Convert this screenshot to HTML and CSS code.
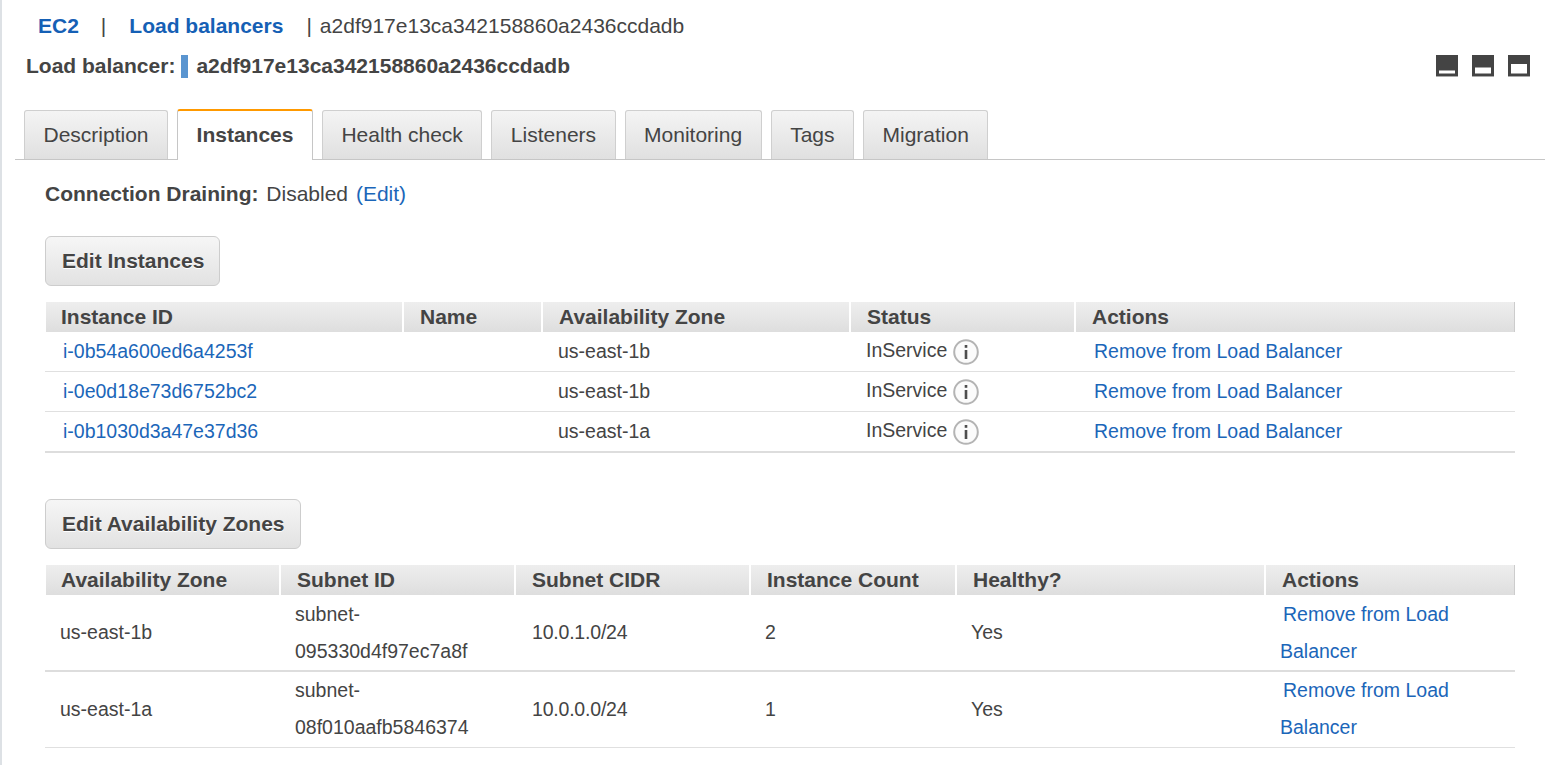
FILE: index.html
```html
<!DOCTYPE html>
<html lang="en">
<head>
<meta charset="utf-8">
<title>Load balancer</title>
<link rel="stylesheet" href="styles.css">
</head>
<body>
<div class="page">
  <nav class="crumbs">
    <a class="crumb" href="#">EC2</a>
    <span class="sep sep-a">|</span>
    <a class="crumb" href="#">Load balancers</a>
    <span class="sep sep-b">|</span>
    <span class="crumb-current">a2df917e13ca342158860a2436ccdadb</span>
  </nav>
  <header class="title-row">
    <div class="title">
      <span class="title-label">Load balancer:</span>
      <span class="swatch"></span>
      <span class="title-name">a2df917e13ca342158860a2436ccdadb</span>
    </div>
    <div class="panes">
      <svg class="pane" viewBox="0 0 22 22"><rect width="22" height="21" fill="#444"/><rect y="21" width="22" height="1" fill="#aaa"/><rect x="3" y="15.5" width="16" height="3" fill="#fff"/></svg>
      <svg class="pane" viewBox="0 0 22 22"><rect width="22" height="21" fill="#444"/><rect y="21" width="22" height="1" fill="#aaa"/><rect x="3" y="12.5" width="16" height="6" fill="#fff"/></svg>
      <svg class="pane" viewBox="0 0 22 22"><rect width="22" height="21" fill="#444"/><rect y="21" width="22" height="1" fill="#aaa"/><rect x="3" y="9" width="16" height="9.5" fill="#fff"/></svg>
    </div>
  </header>
  <div class="tabs">
    <a class="tab" href="#">Description</a>
    <a class="tab tab-active" href="#">Instances</a>
    <a class="tab" href="#">Health check</a>
    <a class="tab" href="#">Listeners</a>
    <a class="tab" href="#">Monitoring</a>
    <a class="tab" href="#">Tags</a>
    <a class="tab" href="#">Migration</a>
  </div>
  <main class="content">
    <p class="draining"><b>Connection Draining:</b> Disabled <a href="#" class="edit">(Edit)</a></p>
    <button class="btn btn-instances" type="button">Edit Instances</button>
    <table class="grid grid-instances">
      <colgroup><col class="i1"><col class="i2"><col class="i3"><col class="i4"><col class="i5"></colgroup>
      <thead><tr><th>Instance ID</th><th>Name</th><th>Availability Zone</th><th>Status</th><th>Actions</th></tr></thead>
      <tbody>
        <tr><td class="id"><a href="#">i-0b54a600ed6a4253f</a></td><td></td><td class="zone">us-east-1b</td><td class="status"><span class="status-in"><span>InService</span><svg class="info" viewBox="0 0 26 26"><circle cx="13" cy="13" r="11.8" fill="#fbfbfb" stroke="#b4b4b4" stroke-width="2"/><rect x="11.7" y="11" width="2.6" height="9" fill="#4d4d4d"/><rect x="11.7" y="6" width="2.6" height="2.8" fill="#4d4d4d"/></svg></span></td><td class="act"><a href="#">Remove from Load Balancer</a></td></tr>
        <tr><td class="id"><a href="#">i-0e0d18e73d6752bc2</a></td><td></td><td class="zone">us-east-1b</td><td class="status"><span class="status-in"><span>InService</span><svg class="info" viewBox="0 0 26 26"><circle cx="13" cy="13" r="11.8" fill="#fbfbfb" stroke="#b4b4b4" stroke-width="2"/><rect x="11.7" y="11" width="2.6" height="9" fill="#4d4d4d"/><rect x="11.7" y="6" width="2.6" height="2.8" fill="#4d4d4d"/></svg></span></td><td class="act"><a href="#">Remove from Load Balancer</a></td></tr>
        <tr class="last"><td class="id"><a href="#">i-0b1030d3a47e37d36</a></td><td></td><td class="zone">us-east-1a</td><td class="status"><span class="status-in"><span>InService</span><svg class="info" viewBox="0 0 26 26"><circle cx="13" cy="13" r="11.8" fill="#fbfbfb" stroke="#b4b4b4" stroke-width="2"/><rect x="11.7" y="11" width="2.6" height="9" fill="#4d4d4d"/><rect x="11.7" y="6" width="2.6" height="2.8" fill="#4d4d4d"/></svg></span></td><td class="act"><a href="#">Remove from Load Balancer</a></td></tr>
      </tbody>
    </table>
    <button class="btn btn-zones" type="button">Edit Availability Zones</button>
    <table class="grid grid-zones">
      <colgroup><col class="z1"><col class="z2"><col class="z3"><col class="z4"><col class="z5"><col class="z6"></colgroup>
      <thead><tr><th>Availability Zone</th><th>Subnet ID</th><th>Subnet CIDR</th><th>Instance Count</th><th>Healthy?</th><th>Actions</th></tr></thead>
      <tbody>
        <tr class="r1"><td>us-east-1b</td><td>subnet-095330d4f97ec7a8f</td><td class="cidr">10.0.1.0/24</td><td>2</td><td>Yes</td><td class="act2"><a href="#">Remove from Load Balancer</a></td></tr>
        <tr class="r2"><td>us-east-1a</td><td>subnet-08f010aafb5846374</td><td class="cidr">10.0.0.0/24</td><td>1</td><td>Yes</td><td class="act2"><a href="#">Remove from Load Balancer</a></td></tr>
      </tbody>
    </table>
  </main>
</div>
</body>
</html>
```

FILE: styles.css
```css
* { box-sizing: border-box; }
html, body { margin: 0; padding: 0; background: #fff; }
body {
  font-family: "Liberation Sans", Arial, sans-serif;
  font-size: 21px;
  color: #444;
  height: 765px;
  overflow: hidden;
}
a { color: #1b66b9; text-decoration: none; }
.page {
  height: 765px;
  border-left: 2px solid #dde1e5;
  padding: 0 15px 0 13px;
}
.crumbs {
  height: 53px;
  padding: 14px 0 0 23px;
  line-height: 24px;
  display: flex;
}
.crumb { font-weight: bold; color: #1560b5; }
.sep { color: #444; }
.sep-a { margin: 0 23px 0 22px; }
.sep-b { margin: 0 8px 0 23px; }
.crumb-current { color: #444; }
.title-row {
  display: flex;
  justify-content: space-between;
  align-items: center;
  height: 26px;
  padding: 0 15px 0 11px;
}
.title { display: flex; align-items: center; font-weight: bold; color: #444; }
.swatch { width: 7px; height: 23px; background: #5a95d0; margin: 0 8px 0 6px; }
.panes { display: flex; gap: 14px; }
.pane { width: 22px; height: 22px; display: block; }
.tabs {
  margin-top: 31px;
  height: 50px;
  display: flex;
  gap: 9px;
  align-items: flex-end;
  padding-left: 9px;
  border-bottom: 1px solid #c6c6c6;
}
.tab {
  height: 49px;
  padding: 0 18.5px;
  line-height: 47px;
  color: #444;
  background: linear-gradient(#f4f4f4, #e0e0e0);
  border: 1px solid #cfcfcf;
  border-bottom: 0;
  border-radius: 3px 3px 0 0;
}
.tab-active {
  height: 51px;
  margin-bottom: -1px;
  line-height: 48px;
  font-weight: bold;
  background: #fff;
  border: 1px solid #c6c6c6;
  border-top: 2px solid #f90;
  border-bottom: 0;
  position: relative;
}
.content { padding: 0 15px 0 30px; }
.draining { margin: 0; height: 24px; line-height: 24px; position: relative; top: 22px; }
.draining b { color: #444; margin-right: 2px; }
.edit { margin-left: 2px; }
.btn {
  display: block;
  font: bold 21px "Liberation Sans", Arial, sans-serif;
  color: #444;
  height: 50px;
  padding: 0 15px 0 16px;
  background: linear-gradient(#f6f6f6, #e2e2e2);
  border: 1px solid #cdcdcd;
  border-radius: 6px;
  text-shadow: 0 1px 0 #fff;
}
.btn-instances { margin-top: 52px; }
.btn-zones { margin-top: 46px; }
.grid {
  width: 1470px;
  table-layout: fixed;
  border-collapse: collapse;
  border-spacing: 0;
  margin-top: 16px;
}
.grid th {
  height: 30px;
  padding: 0 0 0 16px;
  text-align: left;
  font-weight: bold;
  color: #444;
  line-height: 30px;
  background: linear-gradient(#eeeeee, #dedede);
  border-left: 2px solid #fff;
  border-right: 0;
}
.grid th:first-child { border-left: 0; box-shadow: inset 1px 0 0 #fff; }
.grid th:last-child { box-shadow: inset -1px 0 0 #ccc; }
.grid td {
  padding: 0;
  color: #444;
  font-size: 19.5px;
  border-bottom: 1px solid #e0e0e0;
}
.grid-instances tbody tr { height: 40px; }
.grid-instances tbody tr:first-child { height: 39px; }
.grid-instances tbody tr.last { height: 41px; }
.grid-instances tbody tr.last td { border-bottom: 2px solid #ddd; }
.i1 { width: 358px; }
.i2 { width: 139px; }
.i3 { width: 308px; }
.i4 { width: 225px; }
.i5 { width: 440px; }
.id { padding-left: 18px !important; }
.zone { padding-left: 16px !important; }
.status { padding-left: 16px !important; }
.status-in { display: flex; align-items: center; gap: 6px; height: 38px; }
.status-in span { position: relative; top: -1px; }
.info { width: 26px; height: 26px; display: block; margin-top: 2px; }
.act { padding-left: 19px !important; }
.z1 { width: 235px; }
.z2 { width: 235px; }
.z3 { width: 235px; }
.z4 { width: 206px; }
.z5 { width: 309px; }
.z6 { width: 250px; }
.grid-zones td { line-height: 37px; padding-left: 15px; }
.grid-zones td.cidr { padding-left: 17px; letter-spacing: -0.2px; }
.grid-zones tbody tr.r1 { height: 76px; }
.grid-zones tbody tr.r1 td { border-bottom: 2px solid #ddd; }
.grid-zones tbody tr.r2 { height: 76px; }
.act2 { padding-left: 15px !important; }
.act2 a { margin-left: 3px; }
```
